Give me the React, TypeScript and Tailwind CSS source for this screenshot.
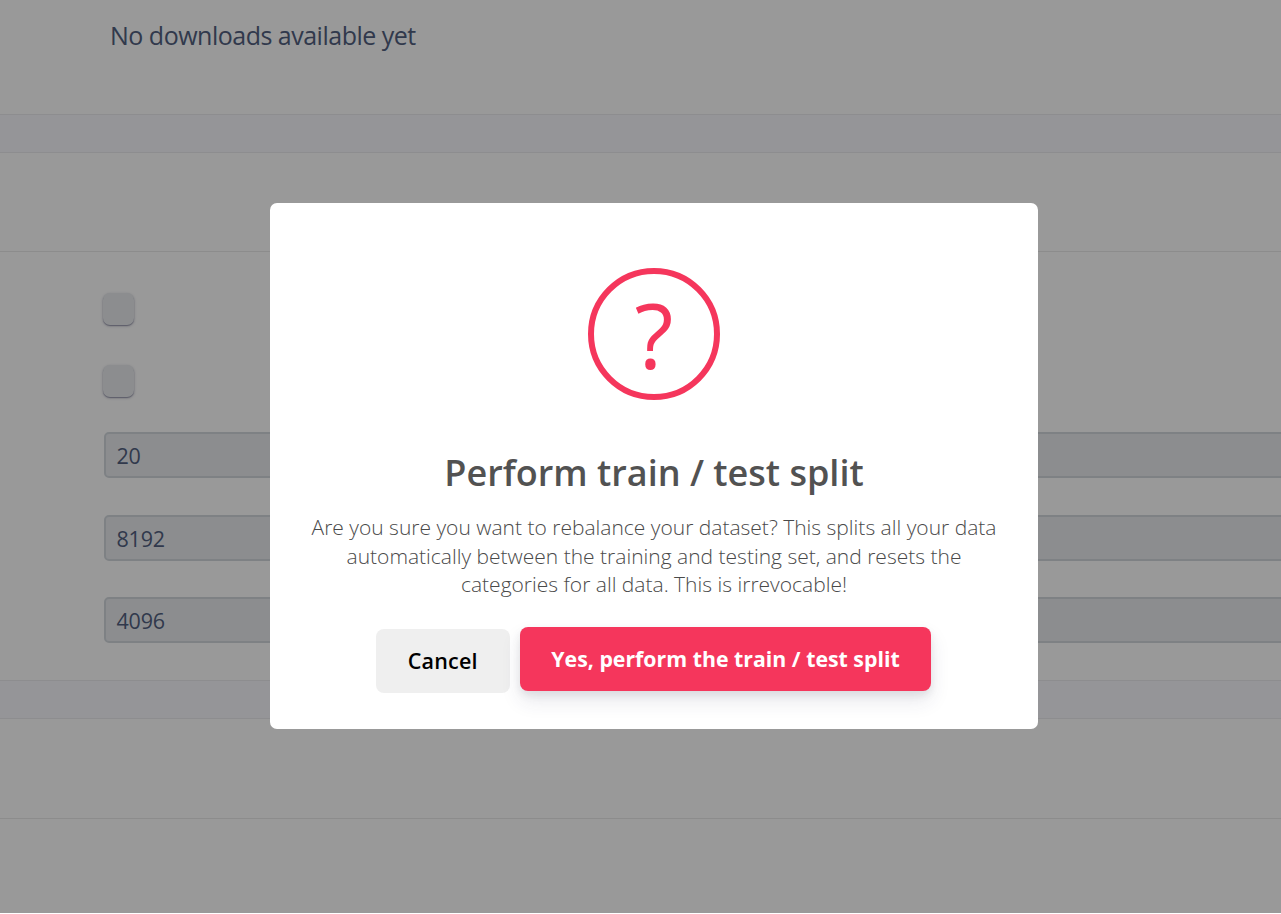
import React from "react";

const fields = ["20", "8192", "4096"];

function Band() {
  return <div className="h-[39px] shrink-0 border-y border-[#ececee] bg-[#f8f9fd]" />;
}

function Checkbox() {
  return (
    <div className="h-8 w-[31px] rounded-[7px] bg-[#e9ecef] shadow-[0_1px_3px_rgba(50,50,93,0.3),0_1px_1px_rgba(50,50,93,0.35)]" />
  );
}

function Field({ value }: { value: string }) {
  return (
    <div className="flex h-[46px] items-center rounded-[5px] border-2 border-[#d2d8dd] bg-[#e9ecef] pl-[11px] pt-[2px] text-[21.5px] leading-none tracking-[-0.2px] text-[#525f7f]">
      {value}
    </div>
  );
}

function Settings() {
  return (
    <div className="flex h-[913px] flex-col overflow-hidden bg-white">
      <section className="h-[114px] shrink-0 pl-[110px] pt-[17px]">
        <p className="text-[25px] leading-9 tracking-[-0.5px] text-[#525f7f]">No downloads available yet</p>
      </section>
      <Band />
      <section className="flex h-[527px] shrink-0 flex-col">
        <div className="h-[99px] shrink-0 border-b border-[#e9e9ea]" />
        <div className="flex flex-col gap-10 pl-[103px] pt-[41px]">
          <Checkbox />
          <Checkbox />
        </div>
        <div className="-mr-4 mt-[35px] flex flex-col gap-[36.5px] pl-[103.5px]">
          {fields.map((value) => (
            <Field key={value} value={value} />
          ))}
        </div>
      </section>
      <Band />
      <section className="h-[100px] shrink-0 border-b border-[#e9e9ea]" />
    </div>
  );
}

function Dialog() {
  return (
    <div
      role="dialog"
      className="flex h-[526px] w-[768px] flex-col items-center rounded-[7px] bg-white pt-[65.7px]"
    >
      <div className="flex size-[132px] items-center justify-center rounded-full border-[6px] border-[#f5365c] text-[90px] leading-none text-[#f5365c]">
        <span>?</span>
      </div>
      <h2 className="mt-[45.3px] whitespace-nowrap text-[36px] font-semibold leading-[54px] text-[#525252]">
        Perform train / test split
      </h2>
      <p className="mt-[13.5px] whitespace-nowrap text-center text-[21px] font-light leading-[28.5px] text-[#4a4a4a]">
        Are you sure you want to rebalance your dataset? This splits all your data
        <br />
        automatically between the training and testing set, and resets the
        <br />
        categories for all data. This is irrevocable!
      </p>
      <div className="mr-px mt-[28.4px] flex gap-[10.5px]">
        <button className="mt-[2px] h-16 w-[133.5px] rounded-[8px] bg-[#efefef] text-[21.5px] font-semibold tracking-[0.2px] text-black">
          Cancel
        </button>
        <button className="h-16 w-[411px] whitespace-nowrap rounded-[8px] bg-[#f5365c] text-[21.3px] font-bold text-white shadow-[0_10px_20px_rgba(50,50,93,0.11),0_4px_9px_rgba(0,0,0,0.08)]">
          Yes, perform the train / test split
        </button>
      </div>
    </div>
  );
}

export default function App() {
  return (
    <main className="relative h-[914px] w-full overflow-hidden bg-white font-['Open_Sans',sans-serif]">
      <Settings />
      <div className="absolute inset-x-0 top-0 flex h-[913px] justify-center bg-black/40 pl-[27px] pt-[202.6px]">
        <Dialog />
      </div>
    </main>
  );
}
